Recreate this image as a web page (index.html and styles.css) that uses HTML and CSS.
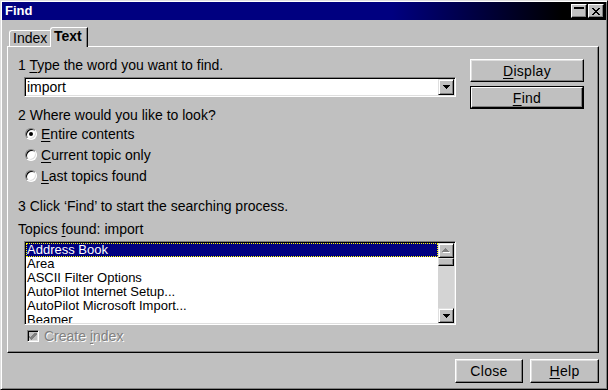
FILE: index.html
```html
<!DOCTYPE html>
<html>
<head>
<meta charset="utf-8">
<link rel="stylesheet" href="styles.css">
</head>
<body>
<div class="window">
  <div class="titlebar">
    <span class="title">Find</span>
    <div class="tb-buttons">
      <span class="tb-btn"><svg width="12" height="10" viewBox="0 0 12 10" shape-rendering="crispEdges"><rect x="1" y="1" width="10" height="2" fill="#000"/></svg></span>
      <span class="tb-btn"><svg width="10" height="9" viewBox="0 0 10 9" shape-rendering="crispEdges"><path d="M1 1h2v1h1v1h2v-1h1v-1h2v1h-1v1h-1v1h-1v1h1v1h1v1h1v1h-2v-1h-1v-1h-2v1h-1v1h-2v-1h1v-1h1v-1h1v-1h-1v-1h-1v-1h-1z" fill="#000"/></svg></span>
    </div>
  </div>
  <div class="client">
    <div class="tabs">
      <div class="tab">Index</div>
      <div class="tab active">Text</div>
    </div>
    <div class="panel">
      <div class="left">
        <div class="label l1">1 <u>T</u>ype the word you want to find.</div>
        <div class="combo">
          <div class="combo-text">import</div>
          <div class="arrow-btn"><svg width="7" height="4" viewBox="0 0 7 4" shape-rendering="crispEdges"><path d="M0 0h7v1h-1v1h-1v1h-1v1h-1v-1h-1v-1h-1v-1h-1z" fill="#000"/></svg></div>
        </div>
        <div class="label l2">2 Where would you like to look?</div>
        <div class="radios">
          <div class="radio-row"><span class="radio"><span class="dot"></span></span><span><u>E</u>ntire contents</span></div>
          <div class="radio-row"><span class="radio"></span><span><u>C</u>urrent topic only</span></div>
          <div class="radio-row"><span class="radio"></span><span><u>L</u>ast topics found</span></div>
        </div>
        <div class="label l3">3 Click ‘Find’ to start the searching process.</div>
        <div class="label l4">Topics <u>f</u>ound: import</div>
        <div class="list">
          <div class="items">
            <div class="item sel">Address Book</div>
            <div class="item">Area</div>
            <div class="item">ASCII Filter Options</div>
            <div class="item">AutoPilot Internet Setup...</div>
            <div class="item">AutoPilot Microsoft Import...</div>
            <div class="item">Beamer</div>
          </div>
          <div class="scrollbar">
            <div class="sb-btn"><svg width="8" height="5" viewBox="0 0 8 5" shape-rendering="crispEdges"><path d="M1 4h7v1h-7z" fill="#fff"/><path d="M3 0h1v1h1v1h1v1h1v1h-7v-1h1v-1h1v-1h1z" fill="#808080"/></svg></div>
            <div class="sb-thumb"></div>
            <div class="sb-track"></div>
            <div class="sb-btn"><svg width="7" height="4" viewBox="0 0 7 4" shape-rendering="crispEdges"><path d="M0 0h7v1h-1v1h-1v1h-1v1h-1v-1h-1v-1h-1v-1h-1z" fill="#000"/></svg></div>
          </div>
        </div>
        <div class="check-row">
          <span class="checkbox"><svg width="8" height="7" viewBox="0 0 8 7" shape-rendering="crispEdges"><path d="M7 0h1v2h-1v1h-1v1h-1v1h-1v1h-1v1h-1v-1h-1v-1h-1v-1h-1v-2h1v1h1v1h1v-1h1v-1h1v-1h1v-1h1z" fill="#808080"/></svg></span>
          <span class="disabled">Create <u>i</u>ndex</span>
        </div>
      </div>
      <div class="right">
        <div class="btn"><span><u>D</u>isplay</span></div>
        <div class="btn default"><div class="btn-inner"><span><u>F</u>ind</span></div></div>
      </div>
    </div>
    <div class="footer">
      <div class="btn close">Close</div>
      <div class="btn help"><span><u>H</u>elp</span></div>
    </div>
  </div>
</div>
</body>
</html>
```

FILE: styles.css
```css
* { box-sizing: border-box; }
html, body { margin: 0; padding: 0; }
body {
  width: 608px;
  height: 390px;
  overflow: hidden;
  background: #c0c0c0;
  font-family: "Liberation Sans", Arial, sans-serif;
  font-size: 14px;
  color: #000;
}
u { text-underline-offset: 2px; }

.window {
  width: 608px;
  height: 390px;
  background: #c0c0c0;
  border: 1px solid;
  border-color: #dfdfdf #000 #000 #dfdfdf;
  box-shadow: inset 1px 1px #fff, inset -1px -1px #808080;
  padding: 1px;
  display: flex;
  flex-direction: column;
}

.titlebar {
  height: 18px;
  flex: none;
  display: flex;
  align-items: center;
  justify-content: space-between;
  background: linear-gradient(to right, #000080 0, #000080 390px, #000 560px);
  padding: 0 2px 0 3px;
}
.title {
  color: #fff;
  font-weight: bold;
  font-size: 13px;
  line-height: 16px;
}
.tb-buttons { display: flex; gap: 1px; }
.tb-btn {
  width: 16px;
  height: 14px;
  background: #c0c0c0;
  border: 1px solid;
  border-color: #fff #000 #000 #fff;
  box-shadow: inset -1px -1px #808080;
  display: flex;
  align-items: flex-start;
  justify-content: center;
  padding-top: 1px;
}
.tb-btn svg { display: block; }
.tb-btn + .tb-btn { padding-top: 2px; }

.client {
  flex: 1;
  display: flex;
  flex-direction: column;
  padding: 0 7px 0 5px;
}

.tabs {
  height: 26px;
  flex: none;
  display: flex;
  align-items: flex-end;
  padding-left: 2px;
}
.tab {
  width: 41px;
  height: 16px;
  border-top: 1px solid #fff;
  border-left: 1px solid #fff;
  border-top-left-radius: 3px;
  padding-left: 3px;
  line-height: 14px;
}
.tab.active {
  width: 38px;
  height: 20px;
  margin-bottom: -1px;
  font-weight: bold;
  background: #c0c0c0;
  border-right: 1px solid #000;
  box-shadow: inset -1px 0 #808080;
  position: relative;
  z-index: 1;
  padding-top: 1px;
}

.panel {
  height: 307px;
  flex: none;
  display: flex;
  gap: 14px;
  padding: 10px 0 0 10px;
  border-top: 1px solid #fff;
  border-left: 1px solid #fff;
  border-right: 1px solid #000;
  border-bottom: 1px solid #000;
  box-shadow: inset -1px -1px #808080;
}
.left {
  width: 438px;
  display: flex;
  flex-direction: column;
}
.label { height: 16px; line-height: 16px; white-space: nowrap; }
.l2 { margin-top: 10px; }
.l3 { margin-top: 12px; }
.l4 { margin-top: 7px; }

.sunken {
  border: 1px solid;
}
.combo, .list {
  margin-left: 6px;
  width: 432px;
  background: #fff;
  border: 1px solid;
  border-color: #808080 #fff #fff #808080;
  box-shadow: inset 1px 1px #000, inset -1px -1px #dfdfdf;
  padding: 1px;
  display: flex;
}
.combo {
  margin-top: 4px;
  height: 20px;
}
.combo-text {
  flex: 1;
  padding-left: 1px;
  line-height: 16px;
}
.arrow-btn, .sb-btn {
  width: 16px;
  height: 16px;
  background: #c0c0c0;
  border: 1px solid;
  border-color: #dfdfdf #000 #000 #dfdfdf;
  box-shadow: inset 1px 1px #fff, inset -1px -1px #808080;
  display: flex;
  align-items: center;
  justify-content: center;
}
.arrow-btn svg, .sb-btn svg { display: block; }

.radios { display: flex; flex-direction: column; }
.radio-row {
  height: 21px;
  display: flex;
  align-items: center;
  gap: 4px;
  padding-left: 7px;
  line-height: 16px;
}
.radio {
  width: 12px;
  height: 12px;
  border-radius: 50%;
  border: 1px solid;
  border-color: #808080 #fff #fff #808080;
  background: #fff;
  box-shadow: inset 1px 1px #000, inset -1px -1px #dfdfdf;
  display: flex;
  align-items: center;
  justify-content: center;
  flex: none;
}
.dot {
  width: 4px;
  height: 4px;
  border-radius: 50%;
  background: #000;
}

.list {
  margin-top: 4px;
  height: 84px;
}
.items {
  flex: 1;
  overflow: hidden;
  font-size: 13px;
}
.item {
  height: 14px;
  line-height: 14px;
  padding-left: 1px;
  white-space: nowrap;
}
.item.sel {
  background: #000080;
  color: #fff;
  outline: 1px dotted #ffff00;
  outline-offset: -1px;
}
.scrollbar {
  width: 16px;
  display: flex;
  flex-direction: column;
  background: #d4d4d4;
}
.scrollbar .sb-btn { height: 15px; }
.sb-thumb {
  height: 8px;
  background: #c0c0c0;
  border: 1px solid;
  border-color: #dfdfdf #000 #000 #dfdfdf;
  box-shadow: inset -1px -1px #808080;
}
.sb-track { flex: 1; }

.check-row {
  margin-top: 2px;
  height: 18px;
  display: flex;
  align-items: center;
  gap: 5px;
  padding-left: 9px;
  line-height: 16px;
}
.checkbox {
  width: 12px;
  height: 12px;
  border: 1px solid;
  border-color: #808080 #fff #fff #808080;
  box-shadow: inset 1px 1px #000, inset -1px -1px #dfdfdf;
  background: #c0c0c0;
  display: flex;
  align-items: center;
  justify-content: center;
}
.checkbox svg { display: block; }
.disabled {
  color: #808080;
  text-shadow: 1px 1px #fff;
}

.right {
  width: 114px;
  margin-top: 2px;
  display: flex;
  flex-direction: column;
  gap: 4px;
}
.btn {
  width: 114px;
  height: 23px;
  background: #c0c0c0;
  border: 1px solid;
  border-color: #fff #000 #000 #fff;
  box-shadow: inset -1px -1px #808080, inset 1px 1px #dfdfdf;
  display: flex;
  align-items: center;
  justify-content: center;
  line-height: 16px;
  letter-spacing: 0.3px;
}
.btn.default {
  border: 1px solid #000;
  box-shadow: none;
  padding: 0;
}
.btn-inner {
  width: 100%;
  height: 100%;
  border: 1px solid;
  border-color: #fff #000 #000 #fff;
  box-shadow: inset -1px -1px #808080;
  display: flex;
  align-items: center;
  justify-content: center;
}

.footer {
  flex: 1;
  display: flex;
  justify-content: flex-end;
  align-items: flex-start;
  gap: 7px;
  padding-top: 6px;
}
.footer .btn { height: 24px; }
.btn.close { width: 68px; }
.btn.help { width: 69px; }
```
